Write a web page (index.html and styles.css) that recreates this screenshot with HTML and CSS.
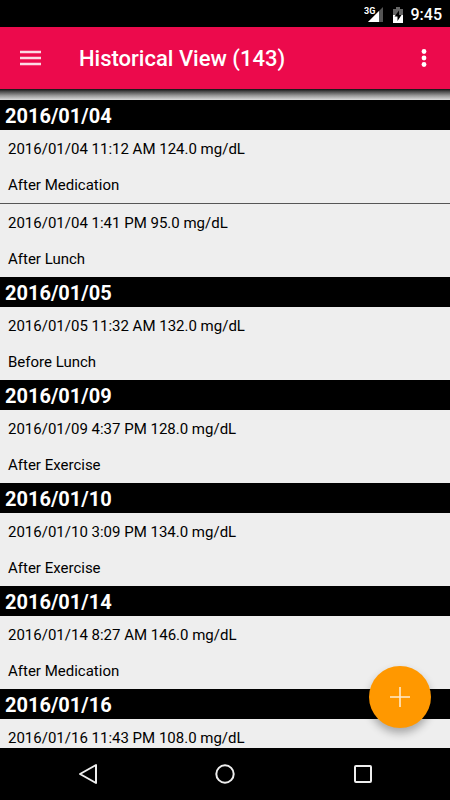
FILE: index.html
```html
<!DOCTYPE html>
<html lang="en">
<head>
<meta charset="utf-8">
<meta name="viewport" content="width=device-width, initial-scale=1">
<title>Historical View</title>
<link rel="stylesheet" href="styles.css">
</head>
<body>
<div class="status">
  <svg class="signal" width="20" height="18" viewBox="0 0 20 18" aria-hidden="true">
    <path d="M19 1v15H4z" fill="#555"/>
    <path d="M15 5v11H4z" fill="#fff"/>
    <text x="0" y="8" class="network">3G</text>
  </svg>
  <svg class="battery" width="10" height="16" viewBox="0 0 10 16" aria-hidden="true">
    <path d="M3 0h4v2h3v7H0V2h3z" fill="#666"/>
    <path d="M0 8h10v8H0z" fill="#fff"/>
    <path d="M6 3.500L1.500 9.500H4.500V14L8.500 8H6z" fill="#000"/>
  </svg>
  <span class="clock">9:45</span>
</div>
<header class="appbar">
  <button class="icon-button" aria-label="Open menu">
    <svg width="21" height="16" viewBox="0 0 21 16"><path d="M0 2h21M0 8h21M0 14h21" stroke="#fff" stroke-opacity=".85" stroke-width="2.400"/></svg>
  </button>
  <h1 class="title">Historical View (143)</h1>
  <button class="icon-button" aria-label="More options">
    <svg width="6" height="18" viewBox="0 0 6 18"><g fill="#fff"><circle cx="3" cy="2.500" r="2.400"/><circle cx="3" cy="9" r="2.400"/><circle cx="3" cy="15.500" r="2.400"/></g></svg>
  </button>
</header>
<main class="content">
  <div class="shade"></div>
  <section>
    <h2 class="date">2016/01/04</h2>
    <ul class="records">
      <li class="record"><p>2016/01/04 11:12 AM 124.0 mg/dL</p><p>After Medication</p></li>
      <li class="record"><p>2016/01/04 1:41 PM 95.0 mg/dL</p><p>After Lunch</p></li>
    </ul>
  </section>
  <section>
    <h2 class="date">2016/01/05</h2>
    <ul class="records">
      <li class="record"><p>2016/01/05 11:32 AM 132.0 mg/dL</p><p>Before Lunch</p></li>
    </ul>
  </section>
  <section>
    <h2 class="date">2016/01/09</h2>
    <ul class="records">
      <li class="record"><p>2016/01/09 4:37 PM 128.0 mg/dL</p><p>After Exercise</p></li>
    </ul>
  </section>
  <section>
    <h2 class="date">2016/01/10</h2>
    <ul class="records">
      <li class="record"><p>2016/01/10 3:09 PM 134.0 mg/dL</p><p>After Exercise</p></li>
    </ul>
  </section>
  <section>
    <h2 class="date">2016/01/14</h2>
    <ul class="records">
      <li class="record"><p>2016/01/14 8:27 AM 146.0 mg/dL</p><p>After Medication</p></li>
    </ul>
  </section>
  <section>
    <h2 class="date">2016/01/16</h2>
    <ul class="records">
      <li class="record"><p>2016/01/16 11:43 PM 108.0 mg/dL</p></li>
    </ul>
  </section>
</main>
<button class="fab" aria-label="Add reading">
  <svg width="20" height="20" viewBox="0 0 20 20"><path d="M10 0v20M0 10h20" stroke="#fff" stroke-opacity=".8" stroke-width="1.600"/></svg>
</button>
<nav class="navbar">
  <button class="icon-button" aria-label="Back">
    <svg width="20" height="22" viewBox="0 0 20 22"><path d="M18 2v18L2 11z" class="outline"/></svg>
  </button>
  <button class="icon-button" aria-label="Home">
    <svg width="20" height="20" viewBox="0 0 20 20"><circle cx="10" cy="10" r="8.700" class="outline"/></svg>
  </button>
  <button class="icon-button" aria-label="Recent apps">
    <svg width="18" height="18" viewBox="0 0 18 18"><rect x="1" y="1" width="16" height="16" rx="1" class="outline"/></svg>
  </button>
</nav>
</body>
</html>
```
FILE: styles.css
```css
* {
  box-sizing: border-box;
}

body {
  margin: 0;
  height: 100vh;
  display: flex;
  flex-direction: column;
  overflow: hidden;
  background: #eee;
  color: #000;
  font-family: Roboto, "Liberation Sans", sans-serif;
}

h1, h2, p, ul {
  margin: 0;
  padding: 0;
}

.status {
  flex: none;
  display: flex;
  justify-content: flex-end;
  align-items: center;
  height: 27px;
  padding: 2px 8px 0;
  background: #000;
  color: #fff;
}

.signal {
  margin-right: 9px;
}

.network {
  font-size: 9px;
  font-weight: 700;
  fill: #fff;
}

.battery {
  margin-right: 8px;
}

.clock {
  font-size: 16px;
  font-weight: 500;
}

.appbar {
  flex: none;
  display: flex;
  align-items: center;
  height: 62px;
  padding: 0 6px;
  background: #ec0a4c;
  color: #fff;
}

.icon-button {
  display: flex;
  align-items: center;
  justify-content: center;
  width: 40px;
  height: 48px;
  padding: 0;
  border: 0;
  background: none;
}

.appbar .icon-button:first-child {
  margin-left: 4px;
}

.title {
  flex: 1;
  padding: 2px 0 0 29px;
  font-size: 22px;
  font-weight: 500;
  line-height: 28px;
}

.content {
  flex: 1;
  min-height: 0;
  overflow: hidden;
}

.shade {
  height: 11px;
  background: linear-gradient(#111, #444 20%, #999 60%, #ddd);
}

.date {
  padding: 2px 5px 0;
  background: #000;
  color: #fff;
  font-size: 20px;
  font-weight: 700;
  line-height: 28px;
}

.records {
  list-style: none;
}

.record {
  display: grid;
  gap: 1px;
  padding: 2px 8px 0;
  font-size: 15px;
  line-height: 35px;
}

.record + .record {
  border-top: 1px solid #555;
}

.fab {
  position: fixed;
  right: 19px;
  bottom: 72px;
  display: flex;
  align-items: center;
  justify-content: center;
  width: 62px;
  height: 62px;
  padding: 0;
  border: 0;
  border-radius: 50%;
  background: #ff9800;
  box-shadow: 0 5px 8px rgba(0, 0, 0, .3);
}

.navbar {
  flex: none;
  display: flex;
  justify-content: space-between;
  align-items: center;
  height: 52px;
  padding: 0 15%;
  background: #000;
}

.outline {
  fill: none;
  stroke: #eee;
  stroke-width: 2;
  stroke-linejoin: round;
}
```
